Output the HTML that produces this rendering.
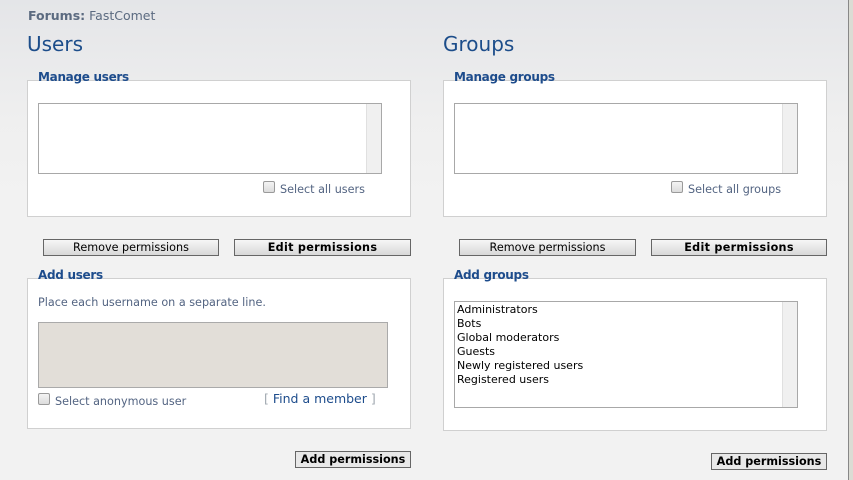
<!DOCTYPE html>
<html><head><meta charset="utf-8"><style>
*{margin:0;padding:0;box-sizing:border-box}
body{width:853px;height:480px;overflow:hidden;position:relative;font-family:"DejaVu Sans","Liberation Sans",sans-serif;background:linear-gradient(#e4e5e8 0px,#efefef 120px,#f2f2f2 200px,#f2f2f2);color:#536482}
.a{position:absolute;white-space:nowrap}
.h{font-size:20px;color:#1c4d8a;font-family:"DejaVu Sans",sans-serif}
.fs{position:absolute;background:#fff;border:1px solid #d0d0d0}
.lg{position:absolute;font-weight:bold;font-size:12px;color:#1d4c8c;font-family:"DejaVu Sans",sans-serif;letter-spacing:-0.3px}
.lb{position:absolute;background:#fff;border:1px solid #a8a8a8}
.sb{position:absolute;right:0;top:0;bottom:0;width:15px;background:#f0f0f0;border-left:1px solid #e0e0e0}
.cb{position:absolute;width:12px;height:12px;border:1px solid #9a9a9a;border-radius:2px;background:linear-gradient(#f4f4f4,#dcdcdc)}
.t{font-size:11.2px;color:#536482}
.btn{position:absolute;height:17px;border:1px solid #666;background:linear-gradient(#f6f6f6,#d8d8d8);font-size:11.2px;text-align:center;line-height:15px;color:#000}
.b{font-weight:bold;letter-spacing:0.3px}
.ap{position:absolute;height:17px;border:1px solid #666;background:#e8e8e8;font-size:11.2px;font-weight:bold;line-height:15px;text-align:center;color:#000}
.opt{font-size:11px;color:#000;line-height:14px}
</style></head><body>
<div class="a" style="left:28px;top:8px;font-size:12.5px;color:#5b6a80"><b>Forums:</b> FastComet</div>
<div class="a h" style="left:27px;top:32px">Users</div>
<div class="a h" style="left:443px;top:32px">Groups</div>

<div class="fs" style="left:27px;top:80px;width:384px;height:137px"></div>
<div class="lg" style="left:38px;top:70px">Manage users</div>
<div class="lb" style="left:38px;top:103px;width:344px;height:71px"><div class="sb"></div></div>
<div class="cb" style="left:263px;top:181px"></div>
<div class="a t" style="left:280px;top:183px">Select all users</div>
<div class="btn" style="left:43px;top:239px;width:176px">Remove permissions</div>
<div class="btn b" style="left:234px;top:239px;width:177px">Edit permissions</div>

<div class="fs" style="left:27px;top:278px;width:384px;height:151px"></div>
<div class="lg" style="left:38px;top:268px">Add users</div>
<div class="a t" style="left:38px;top:296px">Place each username on a separate line.</div>
<div style="position:absolute;left:38px;top:322px;width:350px;height:66px;background:#e2ded8;border:1px solid #aaa"></div>
<div class="cb" style="left:38px;top:393px"></div>
<div class="a t" style="left:55px;top:395px">Select anonymous user</div>
<div class="a" style="left:264px;top:391px;font-size:12.5px;color:#1d4c8c"><span style="color:#a0a8b0">[</span> Find a member <span style="color:#a0a8b0">]</span></div>
<div class="ap" style="left:295px;top:451px;width:116px">Add permissions</div>

<div class="fs" style="left:443px;top:80px;width:384px;height:137px"></div>
<div class="lg" style="left:454px;top:70px">Manage groups</div>
<div class="lb" style="left:454px;top:103px;width:344px;height:71px"><div class="sb"></div></div>
<div class="cb" style="left:671px;top:181px"></div>
<div class="a t" style="left:688px;top:183px">Select all groups</div>
<div class="btn" style="left:459px;top:239px;width:177px">Remove permissions</div>
<div class="btn b" style="left:651px;top:239px;width:176px">Edit permissions</div>

<div class="fs" style="left:443px;top:278px;width:384px;height:153px"></div>
<div class="lg" style="left:454px;top:268px">Add groups</div>
<div class="lb" style="left:454px;top:301px;width:344px;height:107px"><div class="sb"></div>
<div class="a opt" style="left:2px;top:1px">Administrators<br>Bots<br>Global moderators<br>Guests<br>Newly registered users<br>Registered users</div></div>
<div class="ap" style="left:711px;top:453px;width:116px">Add permissions</div>

<div style="position:absolute;left:848px;top:0;width:1px;height:480px;background:#888"></div>
<div style="position:absolute;left:849px;top:0;width:4px;height:480px;background:#dcdcd4"></div>
</body></html>
